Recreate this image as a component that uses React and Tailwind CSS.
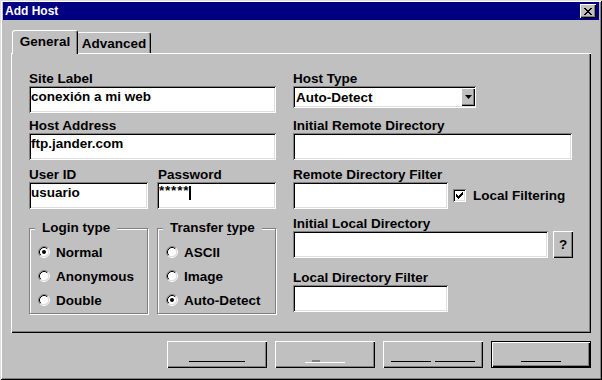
const SUNKEN =
  "bg-white shadow-[inset_1px_1px_#808080,inset_-1px_-1px_#ffffff,inset_2px_2px_#000000,inset_-2px_-2px_#dfdfdf]";
const RAISED =
  "bg-[#c0c0c0] shadow-[inset_1px_1px_#ffffff,inset_-1px_-1px_#000000,inset_-2px_-2px_#808080]";

const Pixels = ({ rows, color = "#000" }) => (
  <svg width={rows[0].length} height={rows.length} shapeRendering="crispEdges">
    {rows.flatMap((r, y) =>
      [...r].map((c, x) =>
        c === "#" ? <rect key={`${x}-${y}`} x={x} y={y} width="1" height="1" fill={color} /> : null
      )
    )}
  </svg>
);

const CLOSE_X = ["##....##", ".##..##.", "..####..", "...##...", "..####..", ".##..##.", "##....##"];
const CHECK = ["......#", ".....##", "#...###", "##.###.", "#####..", ".###...", "..#...."];

const Radio = ({ checked }) => (
  <svg width="12" height="12" viewBox="0 0 12 12">
    <circle cx="6" cy="6" r="4.5" fill="#fff" />
    <path d="M2.11 9.89A5.5 5.5 0 0 1 9.89 2.11" fill="none" stroke="#808080" />
    <path d="M9.89 2.11A5.5 5.5 0 0 1 2.11 9.89" fill="none" stroke="#fff" />
    <path d="M2.82 9.18A4.5 4.5 0 0 1 9.18 2.82" fill="none" stroke="#000" />
    <path d="M9.18 2.82A4.5 4.5 0 0 1 2.82 9.18" fill="none" stroke="#dfdfdf" />
    {checked && <circle cx="6" cy="6" r="2" fill="#000" />}
  </svg>
);

const Label = ({ children }) => <div className="h-[15px] whitespace-nowrap">{children}</div>;

const GroupBox = ({ title, options }) => (
  <div className="w-[119px] h-[86px] border border-[#808080] shadow-[inset_1px_1px_#ffffff,1px_1px_#ffffff]">
    <div className="-mt-[9px] ml-[5px] px-[7px] w-max h-[15px] bg-[#c0c0c0]">{title}</div>
    <div className="mt-[5px]">
      {options.map((o) => (
        <div key={o.label} className="h-[24px] flex items-center gap-[6px] pl-[8px]">
          <Radio checked={o.checked} />
          <span>{o.label}</span>
        </div>
      ))}
    </div>
  </div>
);

export default function App() {
  return (
    <div className="w-[602px] h-[380px] bg-[#c0c0c0] pt-[2px] px-[3px] flex flex-col text-black font-bold text-[13.5px] leading-[15px] font-['Liberation_Sans',Arial,sans-serif] shadow-[inset_1px_1px_#dfdfdf,inset_-1px_-1px_#000000,inset_2px_2px_#ffffff,inset_-2px_-2px_#808080]">
      {/* title bar */}
      <div className="h-[18px] bg-[#000080] flex items-center justify-between pl-[2px] pr-[3px] text-white text-[12px]">
        <span className="pt-[1px]">Add Host</span>
        <div className={`w-[16px] h-[14px] flex items-center justify-center ${RAISED}`}>
          <Pixels rows={CLOSE_X} />
        </div>
      </div>

      <div className="px-[8px]">
        {/* tabs */}
        <div className="mt-[10px] h-[23px] flex items-end pl-[1px]">
          <div className="relative z-10 -mb-px w-[66px] h-[24px] pt-[3px] text-center bg-[#c0c0c0] border-l border-t border-white border-r border-r-black rounded-t-[3px] shadow-[inset_-1px_0_#808080]">
            General
          </div>
          <div className="w-[73px] h-[21px] pt-[3px] text-center border-t border-white border-r border-r-black rounded-tr-[3px] shadow-[inset_-1px_0_#808080]">
            Advanced
          </div>
        </div>

        {/* panel */}
        <div className="w-[580px] h-[280px] pt-[18px] pl-[18px] flex gap-[17px] shadow-[inset_1px_1px_#ffffff,inset_-1px_-1px_#000000,inset_-2px_-2px_#808080]">
          {/* left column */}
          <div className="w-[247px] flex flex-col">
            <Label>Site Label</Label>
            <div className={`h-[27px] pl-[2px] pt-[3px] whitespace-nowrap ${SUNKEN}`}>conexión a mi web</div>
            <div className="mt-[5px]">
              <Label>Host Address</Label>
            </div>
            <div className={`h-[27px] pl-[2px] pt-[3px] ${SUNKEN}`}>ftp.jander.com</div>
            <div className="mt-[7px] flex gap-[9px]">
              <div className="w-[119px]">
                <Label>User ID</Label>
                <div className={`h-[27px] pl-[2px] pt-[3px] ${SUNKEN}`}>usuario</div>
              </div>
              <div className="w-[119px]">
                <div className="pl-[1px]">
                  <Label>Password</Label>
                </div>
                <div className={`h-[27px] pl-[2px] pt-[1px] flex items-start ${SUNKEN}`}>
                  <span className="tracking-[0.8px]">*****</span>
                  <span className="mt-[3px] w-[2px] h-[14px] bg-black" />
                </div>
              </div>
            </div>
            <div className="mt-[19px] flex gap-[9px]">
              <GroupBox
                title="Login type"
                options={[
                  { label: "Normal", checked: true },
                  { label: "Anonymous" },
                  { label: "Double" },
                ]}
              />
              <GroupBox
                title={
                  <>
                    Transfer <span className="underline underline-offset-2">t</span>ype
                  </>
                }
                options={[{ label: "ASCII" }, { label: "Image" }, { label: "Auto-Detect", checked: true }]}
              />
            </div>
          </div>

          {/* right column */}
          <div className="w-[280px] flex flex-col">
            <Label>Host Type</Label>
            <div className={`w-[183px] h-[22px] flex items-center pl-[3px] pr-[1px] ${SUNKEN}`}>
              <span className="flex-1">Auto-Detect</span>
              <div className={`w-[14px] h-[18px] flex items-center justify-center ${RAISED}`}>
                <svg width="7" height="4" viewBox="0 0 7 4">
                  <path d="M0 0H7L3.5 4Z" fill="#000" />
                </svg>
              </div>
            </div>
            <div className="mt-[10px]">
              <Label>Initial Remote Directory</Label>
            </div>
            <div className={`w-[279px] h-[27px] ${SUNKEN}`} />
            <div className="mt-[7px]">
              <Label>Remote Directory Filter</Label>
            </div>
            <div className="flex items-center">
              <div className={`w-[155px] h-[27px] ${SUNKEN}`} />
              <div className={`ml-[5px] w-[13px] h-[13px] flex items-center justify-center ${SUNKEN}`}>
                <Pixels rows={CHECK} />
              </div>
              <span className="ml-[7px]">Local Filtering</span>
            </div>
            <div className="mt-[7px]">
              <Label>Initial Local Directory</Label>
            </div>
            <div className="flex gap-[5px]">
              <div className={`w-[255px] h-[27px] ${SUNKEN}`} />
              <div className={`w-[20px] h-[27px] flex items-center justify-center ${RAISED}`}>?</div>
            </div>
            <div className="mt-[12px]">
              <Label>Local Directory Filter</Label>
            </div>
            <div className={`w-[155px] h-[27px] ${SUNKEN}`} />
          </div>
        </div>

        {/* buttons */}
        <div className="mt-[8px] w-[580px] flex justify-end gap-[8px]">
          <div className={`w-[100px] h-[27px] flex justify-center pt-[20px] ${RAISED}`}>
            <span className="w-[56px] h-px bg-black" />
          </div>
          <div className={`w-[100px] h-[27px] flex flex-col items-center pt-[19px] ${RAISED}`}>
            <div className="w-[40px]">
              <div className="ml-[7px] w-[8px] h-[2px] bg-[#808080]" />
              <div className="w-[40px] h-px bg-white" />
            </div>
          </div>
          <div className={`w-[100px] h-[27px] flex justify-center gap-[4px] pt-[20px] ${RAISED}`}>
            <span className="w-[40px] h-px bg-black" />
            <span className="w-[40px] h-px bg-black" />
          </div>
          <div className="w-[100px] h-[27px] border border-black">
            <div className={`h-full flex justify-center pt-[19px] ${RAISED}`}>
              <span className="w-[40px] h-px bg-black" />
            </div>
          </div>
        </div>
      </div>
    </div>
  );
}
